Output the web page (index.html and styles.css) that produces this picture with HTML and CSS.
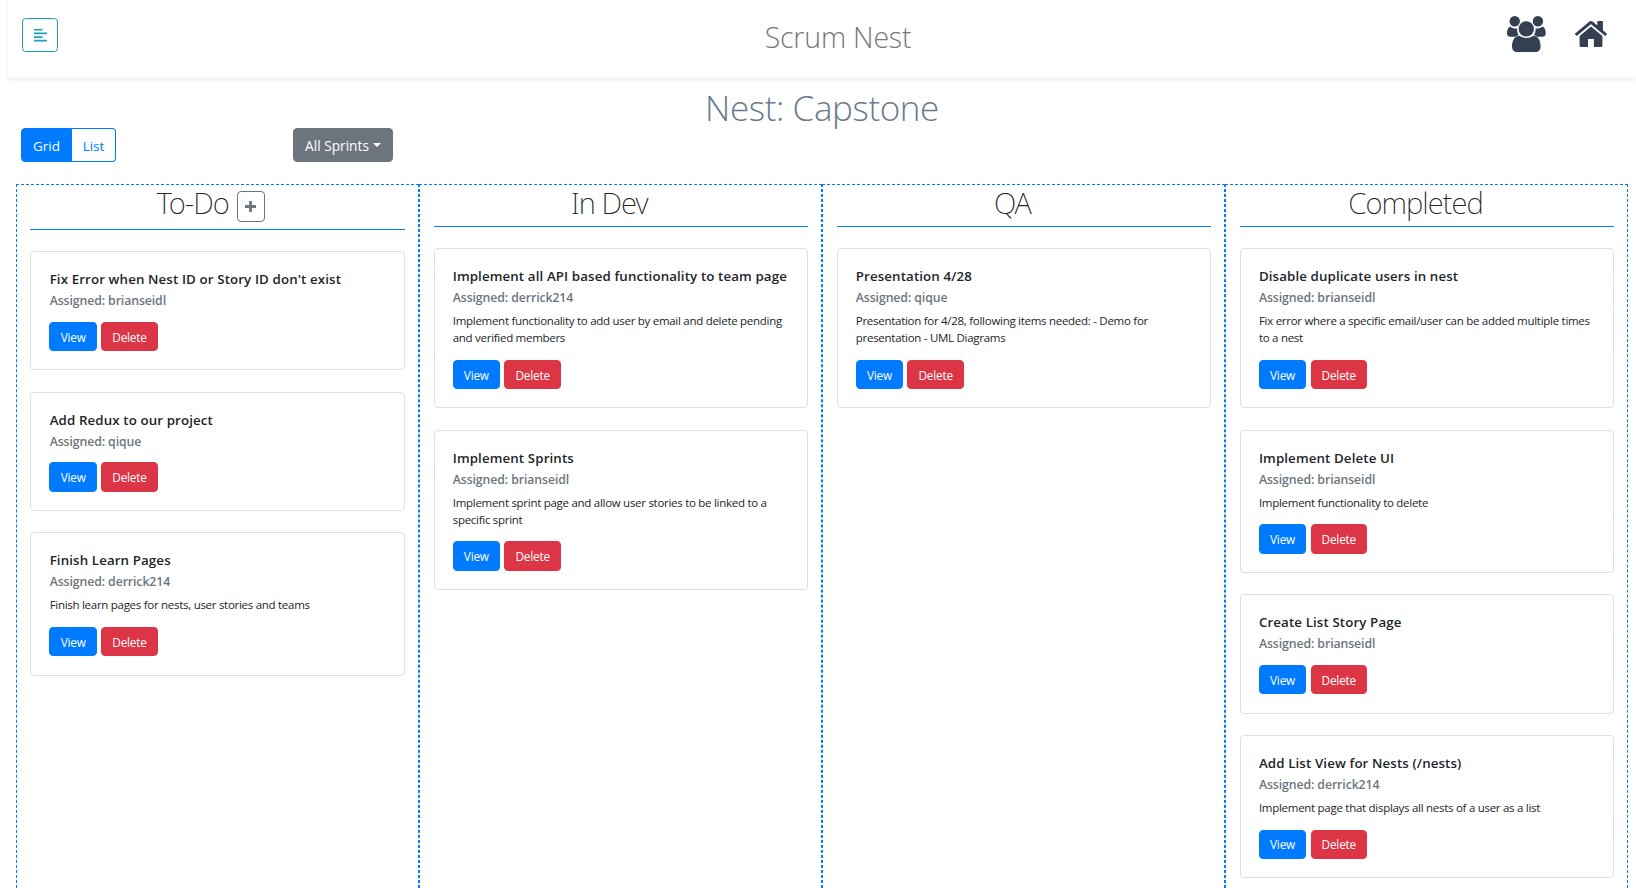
FILE: index.html
```html
<!DOCTYPE html>
<html lang="en">
<head>
<meta charset="utf-8">
<title>Scrum Nest</title>
<link rel="stylesheet" href="styles.css">
</head>
<body>
<header class="navbar">
  <button class="btn btn-menu" aria-label="Menu">
    <svg width="13" height="13" viewBox="0 0 13 13" fill="currentColor"><path d="M0 0h8.500v1.600H0zM0 3.600h13v1.700H0zM0 7.200h8.500v1.700H0zM0 10.800h13v1.700H0z"/></svg>
  </button>
  <span class="brand">Scrum Nest</span>
  <nav class="nav-icons">
    <svg class="icon-users" viewBox="0 0 39 36" fill="currentColor"><circle cx="7.700" cy="5.200" r="5.200"/><circle cx="30.900" cy="5.200" r="5.200"/><path d="M3.200 10.500C.8 11.500 0 14.200 0 17.500c0 2.200 1.400 3.300 3.300 3.300H8.500c1-.8 2-1.300 3.300-1.700-1.300-1.800-1.900-3.900-1.600-6.700-2.600.4-5-.2-7-1.900zM35.400 10.500c2.500 1 3.300 3.700 3.300 7 0 2.200-1.400 3.300-3.300 3.300h-5.200c-1-.8-2-1.300-3.300-1.700 1.300-1.800 1.900-3.900 1.600-6.700 2.500.4 4.900-.2 6.900-1.900z"/><circle cx="19.300" cy="12.900" r="7.700"/><path d="M12.700 19.700c-5 .2-7.700 4.300-7.700 10.800C5 34 7 36 10.300 36h18c3.300 0 5.300-2 5.300-5.500 0-6.500-2.600-10.600-7.500-10.800-3.800 3-9.600 3-13.400 0z"/></svg>
    <svg class="icon-home" viewBox="0 0 32 26" fill="currentColor"><path d="M16 0c.6 0 1.100.2 1.600.6L22.300 4.600V.8c0-.4.300-.7.700-.7h4.200c.4 0 .7.300.7.700v8.500l3.800 3.200c.3.200.3.600.1.900l-1 1.200c-.2.300-.6.300-.9.100L16.400 3.500c-.3-.2-.6-.2-.9 0L2 14.700c-.3.200-.7.200-.9-.1l-1-1.200c-.2-.3-.2-.7.100-.9L14.400.6C14.900.2 15.400 0 16 0z"/><path d="M16 5.500 27.400 15v9.800c0 .7-.5 1.200-1.200 1.200h-7.300v-8H13v8H5.800c-.7 0-1.200-.5-1.200-1.200V15z"/></svg>
  </nav>
</header>
<main>
  <h1 class="nest-title">Nest: Capstone</h1>
  <div class="toolbar">
    <div class="btn-group"><button class="btn btn-on">Grid</button><button class="btn btn-off">List</button></div>
    <button class="btn btn-sprints">All Sprints<span class="caret"></span></button>
  </div>
  <div class="board">
    <section class="column">
      <div class="column-head"><h2>To-Do</h2><button class="btn btn-add" aria-label="Add"><svg width="11" height="11" viewBox="0 0 11 11" fill="currentColor"><path d="M4.100 0h2.800v4.100H11v2.800H6.900V11H4.100V6.900H0V4.100h4.100z"/></svg></button></div>
      <article class="card"><h3>Fix Error when Nest ID or Story ID don't exist</h3><h4>Assigned: brianseidl</h4><div class="actions"><button class="btn btn-view">View</button><button class="btn btn-delete">Delete</button></div></article>
      <article class="card"><h3>Add Redux to our project</h3><h4>Assigned: qique</h4><div class="actions"><button class="btn btn-view">View</button><button class="btn btn-delete">Delete</button></div></article>
      <article class="card"><h3>Finish Learn Pages</h3><h4>Assigned: derrick214</h4><p>Finish learn pages for nests, user stories and teams</p><div class="actions"><button class="btn btn-view">View</button><button class="btn btn-delete">Delete</button></div></article>
    </section>
    <section class="column">
      <div class="column-head"><h2>In Dev</h2></div>
      <article class="card"><h3>Implement all API based functionality to team page</h3><h4>Assigned: derrick214</h4><p>Implement functionality to add user by email and delete pending<br>and verified members</p><div class="actions"><button class="btn btn-view">View</button><button class="btn btn-delete">Delete</button></div></article>
      <article class="card"><h3>Implement Sprints</h3><h4>Assigned: brianseidl</h4><p>Implement sprint page and allow user stories to be linked to a<br>specific sprint</p><div class="actions"><button class="btn btn-view">View</button><button class="btn btn-delete">Delete</button></div></article>
    </section>
    <section class="column">
      <div class="column-head"><h2>QA</h2></div>
      <article class="card"><h3>Presentation 4/28</h3><h4>Assigned: qique</h4><p>Presentation for 4/28, following items needed: - Demo for<br>presentation - UML Diagrams</p><div class="actions"><button class="btn btn-view">View</button><button class="btn btn-delete">Delete</button></div></article>
    </section>
    <section class="column">
      <div class="column-head"><h2>Completed</h2></div>
      <article class="card"><h3>Disable duplicate users in nest</h3><h4>Assigned: brianseidl</h4><p>Fix error where a specific email/user can be added multiple times<br>to a nest</p><div class="actions"><button class="btn btn-view">View</button><button class="btn btn-delete">Delete</button></div></article>
      <article class="card"><h3>Implement Delete UI</h3><h4>Assigned: brianseidl</h4><p>Implement functionality to delete</p><div class="actions"><button class="btn btn-view">View</button><button class="btn btn-delete">Delete</button></div></article>
      <article class="card"><h3>Create List Story Page</h3><h4>Assigned: brianseidl</h4><div class="actions"><button class="btn btn-view">View</button><button class="btn btn-delete">Delete</button></div></article>
      <article class="card"><h3>Add List View for Nests (/nests)</h3><h4>Assigned: derrick214</h4><p>Implement page that displays all nests of a user as a list</p><div class="actions"><button class="btn btn-view">View</button><button class="btn btn-delete">Delete</button></div></article>
    </section>
  </div>
</main>
</body>
</html>
```

FILE: styles.css
```css
* { box-sizing: border-box; }
body {
  margin: 0;
  height: 888px;
  overflow: hidden;
  background: #fff;
  color: #212529;
  font-family: "Segoe UI", "Open Sans", "Noto Sans", sans-serif;
}
h1, h2, h3, h4, p { margin: 0; white-space: nowrap; }
main { display: flex; flex-direction: column; height: 810px; }

.navbar {
  display: grid;
  grid-template-columns: 1fr auto 1fr;
  align-items: start;
  height: 78px;
  margin-left: 8px;
  padding: 16px 29px 0 14px;
  border-radius: 0 0 4px 4px;
  box-shadow: 0 2px 4px rgba(0, 0, 0, .08);
}
.brand {
  margin-left: 47px;
  color: #787878;
  font-size: 28.500px;
  font-weight: 300;
  line-height: 42px;
  letter-spacing: -.2px;
}
.nav-icons { display: flex; justify-content: flex-end; gap: 29px; color: #343f52; }
.icon-users { width: 39px; height: 36px; }
.icon-home { width: 32px; height: 26px; margin-top: 5px; }

.btn {
  display: inline-flex;
  align-items: center;
  justify-content: center;
  padding: 0;
  border: 1px solid;
  border-radius: 4px;
  background: none;
  font: 400 13.500px "Segoe UI", "Open Sans", "Noto Sans", sans-serif;
}
.btn-menu { width: 36px; height: 34px; margin-top: 2px; color: #17a2b8; border-radius: 3.500px; }

.nest-title {
  margin-top: 5px;
  text-align: center;
  height: 45px;
  padding-left: 8px;
  color: #6a7b8c;
  font-size: 35px;
  font-weight: 300;
  line-height: 50px;
  letter-spacing: -.4px;
}
.toolbar { display: flex; flex-shrink: 0; gap: 177px; height: 34px; margin: 0 0 22px 21px; }
.btn-group { display: flex; }
.btn-on, .btn-off { padding-top: 1px; }
.btn-on { width: 51px; border-radius: 4px 0 0 4px; border-color: #007bff; background: #007bff; color: #fff; }
.btn-off { width: 44px; border-radius: 0 4px 4px 0; border-left: 0; color: #007bff; }
.btn-sprints { width: 100px; gap: 4px; border-color: #6c757d; background: #6c757d; color: #fff; font-size: 13.700px; }
.caret { border: 4px solid transparent; border-top-color: #fff; border-bottom: 0; }

.board { display: grid; grid-template-columns: repeat(4, 403.100px); flex: 1; min-height: 0; margin-left: 16px; }
.column { height: 704px; padding: 0 13px 0 13.450px; border: 1px dashed #007bff; border-bottom: 0; }
.column-head {
  display: flex;
  justify-content: center;
  gap: 8px;
  height: 42px;
  margin-bottom: 21px;
  padding-right: 23px;
  border-bottom: 1px solid #007bff;
}
.column-head:has(.btn-add) { height: 45px; padding-right: 14px; }
.column-head h2 {
  font-family: "Segoe UI", "Noto Sans", "Open Sans", sans-serif;
  font-size: 29.300px;
  font-weight: 200;
  line-height: 36px;
  letter-spacing: -.95px;
}
.btn-add { width: 28px; height: 31px; margin-top: 6px; color: #6c757d; }

.card {
  margin-bottom: 21.100px;
  padding: 17px 18px 18.200px 18.200px;
  border: 1px solid #dfdfdf;
  border-radius: 4px;
}
.card h3 { font-size: 13.300px; font-weight: 600; line-height: 21px; letter-spacing: .12px; }
.card h4 { color: #6c757d; font-size: 12.300px; font-weight: 600; line-height: 21px; letter-spacing: -.1px; }
.card p { margin-top: 4px; font-size: 11.500px; line-height: 17px; letter-spacing: -.28px; }
.actions { display: flex; gap: 4.200px; margin: 10.900px 0 0 -.2px; }
.card p + .actions { margin-top: 13.900px; }
.btn-view, .btn-delete { height: 29.400px; font-size: 11.800px; letter-spacing: -.2px; color: #fff; }
.btn-view { width: 47.600px; background: #007bff; border-color: #007bff; }
.btn-delete { width: 56.600px; background: #dc3545; border-color: #dc3545; }
```
